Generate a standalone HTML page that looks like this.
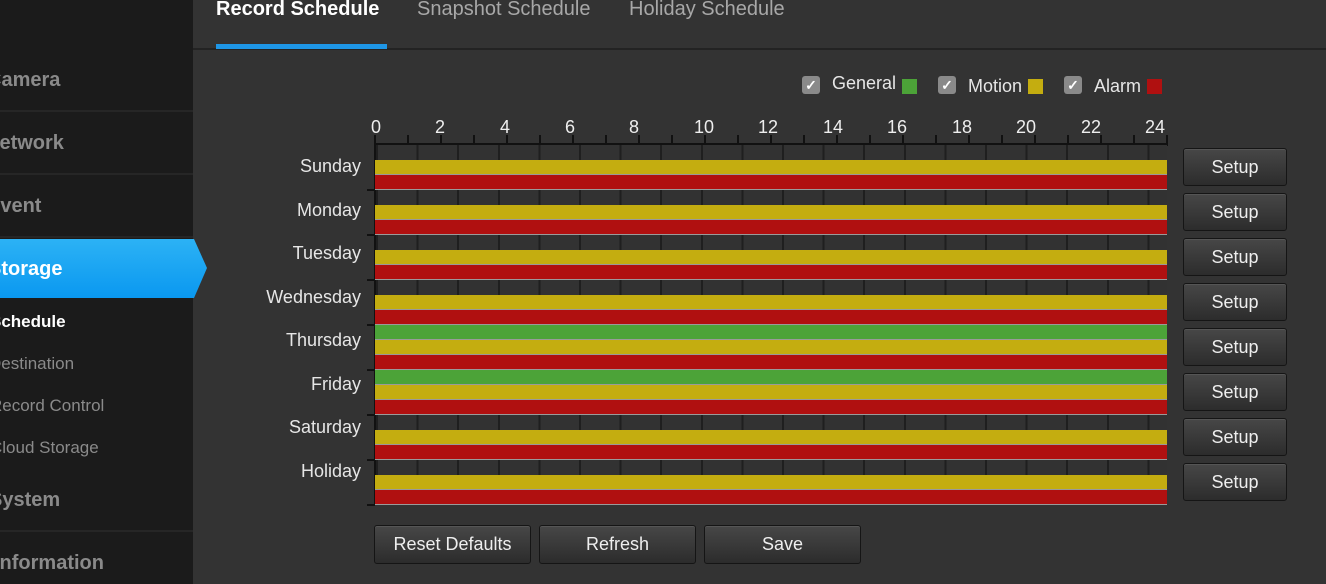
<!DOCTYPE html>
<html style="height:584px;overflow:hidden"><head><style>
*{margin:0;padding:0;box-sizing:border-box}
body{width:1326px;height:584px;overflow:hidden;background:#333;font-family:"Liberation Sans",Arial,sans-serif;position:relative}
.a{position:absolute}
#side{left:0;top:0;width:193px;height:584px;background:#1b1b1b}
.mi{left:0;width:193px;height:63px;border-bottom:2px solid #262626;color:#8a8a8a;font-weight:bold;font-size:20px;line-height:63px;white-space:nowrap;overflow:hidden}
.mi span{position:relative;left:-15px}
.si{color:#8a8a8a;font-size:17px;white-space:nowrap}
.tab{top:-2px;font-size:20px;color:#a8a8a8;line-height:22px}
.grid{left:374px;width:793px;height:360px;top:145px;background-color:#323232;background-image:repeating-linear-gradient(90deg,#1f1f1f 0 2px,transparent 2px 40.6px);border-left:2px solid #111}
.band{left:375px;width:792px;height:15px;border-bottom:1.5px solid #9a9a9a}
.y{background:#c4ad10}.r{background:#b01010}.g{background:#4ca338}
.day{width:361px;left:0;text-align:right;font-size:18px;color:#e6e6e6}
.btn{background:linear-gradient(#474747,#2c2c2c);border:1px solid #151515;border-radius:3px;color:#eee;font-size:18px;text-align:center;box-shadow:inset 0 1px 0 #555}
.setup{left:1183px;width:104px;height:38px;line-height:36px}
.cb{width:18px;height:18px;background:#8a8a8a;border-radius:3px;color:#fff;font-size:14px;line-height:18px;text-align:center;font-weight:bold}
.lt{font-size:18px;color:#e6e6e6}
.sq{width:15px;height:15px}
.num{font-size:18px;color:#eee;top:117px;width:30px;text-align:center}
</style></head><body>
<div id="side" class="a"></div>
<div class="a mi" style="top:49px"><span style="left:-13px">Camera</span></div>
<div class="a mi" style="top:112px"><span style="left:-15px">Network</span></div>
<div class="a mi" style="top:175px"><span style="left:-13px">Event</span></div>
<svg class="a" style="left:0;top:238px" width="210" height="62"><defs><linearGradient id="bg" x1="0" y1="0" x2="0" y2="1"><stop offset="0" stop-color="#2cb2f5"/><stop offset="1" stop-color="#0a98f0"/></linearGradient></defs><polygon points="0,1 194,1 207,30 194,60 0,60" fill="url(#bg)"/></svg>
<div class="a" style="left:-12px;top:258px;font-size:20px;font-weight:bold;color:#fff">Storage</div>
<div class="a si" style="top:312px;color:#fff;font-weight:bold;left:-10px">Schedule</div>
<div class="a si" style="top:354px;left:-11px">Destination</div>
<div class="a si" style="top:396px;left:-10px">Record Control</div>
<div class="a si" style="top:438px;left:-10px">Cloud Storage</div>
<div class="a mi" style="top:469px"><span style="left:-11px">System</span></div>
<div class="a mi" style="top:532px;border:none"><span style="left:-6px">Information</span></div>

<div class="a" style="left:193px;top:48px;width:1133px;height:2px;background:#232323"></div>
<div class="a tab" style="left:216px;color:#fff;font-weight:bold">Record Schedule</div>
<div class="a" style="left:216px;top:44px;width:171px;height:5px;background:#1e96e6"></div>
<div class="a tab" style="left:417px">Snapshot Schedule</div>
<div class="a tab" style="left:629px">Holiday Schedule</div>

<div class="a cb" style="left:802px;top:76px">✓</div><div class="a lt" style="left:832px;top:73px">General</div><div class="a sq g" style="left:902px;top:79px"></div>
<div class="a cb" style="left:938px;top:76px">✓</div><div class="a lt" style="left:968px;top:76px">Motion</div><div class="a sq y" style="left:1028px;top:79px"></div>
<div class="a cb" style="left:1064px;top:76px">✓</div><div class="a lt" style="left:1094px;top:76px">Alarm</div><div class="a sq r" style="left:1147px;top:79px"></div>

<div class="a num" style="left:361px">0</div><div class="a num" style="left:425px">2</div><div class="a num" style="left:490px">4</div><div class="a num" style="left:555px">6</div><div class="a num" style="left:619px">8</div><div class="a num" style="left:689px">10</div><div class="a num" style="left:753px">12</div><div class="a num" style="left:818px">14</div><div class="a num" style="left:882px">16</div><div class="a num" style="left:947px">18</div><div class="a num" style="left:1011px">20</div><div class="a num" style="left:1076px">22</div><div class="a num" style="left:1140px">24</div>
<div class="a" style="left:374px;top:135px;width:794px;height:9px;background-image:repeating-linear-gradient(90deg,#111 0 2px,transparent 2px 33px)"></div>
<div class="a" style="left:374px;top:143px;width:794px;height:3px;background:#111"></div>

<div class="a grid"></div>
<div id="bands"></div>
<script>
var days=["Sunday","Monday","Tuesday","Wednesday","Thursday","Friday","Saturday","Holiday"];var h="";
for(var i=0;i<8;i++){var t=145+45*i;
h+='<div class="a day" style="top:'+(156+43.5*i)+'px">'+days[i]+'</div>';
h+='<div class="a" style="left:367px;top:'+(t+44)+'px;width:8px;height:2px;background:#111"></div>';
if(i==4||i==5)h+='<div class="a band g" style="top:'+t+'px"></div>';
h+='<div class="a band y" style="top:'+(t+15)+'px"></div><div class="a band r" style="top:'+(t+30)+'px"></div>';
h+='<div class="a btn setup" style="top:'+(148+45*i)+'px">Setup</div>';}
document.getElementById("bands").innerHTML=h;
</script>
<div class="a btn" style="left:374px;top:525px;width:157px;height:39px;line-height:37px">Reset Defaults</div>
<div class="a btn" style="left:539px;top:525px;width:157px;height:39px;line-height:37px">Refresh</div>
<div class="a btn" style="left:704px;top:525px;width:157px;height:39px;line-height:37px">Save</div>
</body></html>
